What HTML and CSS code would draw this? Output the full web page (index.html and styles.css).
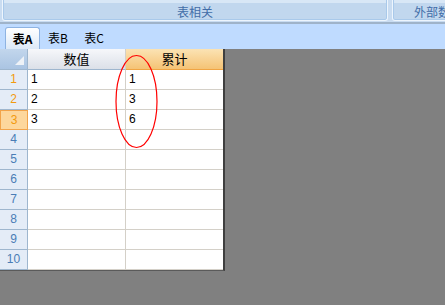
FILE: index.html
```html
<!DOCTYPE html>
<html lang="zh">
<head>
    <meta charset="UTF-8">
    <title>表A</title>
    <link rel="stylesheet" href="styles.css">
</head>
<body>
    <div class="ribbon">
        <div class="group group-main">表相关</div>
        <div class="group group-ext">外部数据</div>
    </div>
    <div class="tabs">
        <div class="tab active">表A</div>
        <div class="tab">表B</div>
        <div class="tab">表C</div>
    </div>
    <div class="sheet">
        <div class="grid">
            <div class="corner"><span class="tri"></span></div>
            <div class="col-head">数值</div>
            <div class="col-head sel">累计</div>

            <div class="row-head sel-text">1</div><div class="cell">1</div><div class="cell">1</div>
            <div class="row-head sel-text">2</div><div class="cell">2</div><div class="cell">3</div>
            <div class="row-head current">3</div><div class="cell">3</div><div class="cell">6</div>
            <div class="row-head">4</div><div class="cell"></div><div class="cell"></div>
            <div class="row-head">5</div><div class="cell"></div><div class="cell"></div>
            <div class="row-head">6</div><div class="cell"></div><div class="cell"></div>
            <div class="row-head">7</div><div class="cell"></div><div class="cell"></div>
            <div class="row-head">8</div><div class="cell"></div><div class="cell"></div>
            <div class="row-head">9</div><div class="cell"></div><div class="cell"></div>
            <div class="row-head">10</div><div class="cell"></div><div class="cell"></div>
        </div>
        <!-- 标注圈 -->
        <svg class="mark" width="46" height="96" viewBox="0 0 46 96">
            <ellipse cx="22.5" cy="47.5" rx="20.5" ry="46" fill="none" stroke="#ff0000" stroke-width="1.2"/>
        </svg>
    </div>
</body>
</html>
```

FILE: styles.css
```css
body {
    margin: 0;
    background-color: #808080;
    font-family: "Liberation Sans", "Noto Sans CJK SC", sans-serif;
    font-size: 12px;
    width: 445px;
    height: 305px;
    overflow: hidden;
}

.ribbon {
    display: flex;
    height: 22px;
    background-color: #c9dcf1;
    border-bottom: 2px solid #9fb3c9;
    overflow: hidden;
}

.group {
    box-sizing: border-box;
    height: 21px;
    padding-top: 4px;
    line-height: 15px;
    text-align: center;
    color: #416da8;
    font-family: "Noto Sans CJK SC", sans-serif;
    font-size: 12px;
    background: linear-gradient(#d8e7f6 0, #d8e7f6 3px, #c1d7ee 3px);
    border: 1px solid #edf5fd;
    border-top: none;
    border-radius: 0 0 3px 3px;
    box-shadow: inset 1px 0 #a9c9ea, inset -1px 0 #a9c9ea, inset 0 -1px #a9c9ea;
}

.group-main {
    flex: 0 0 386px;
    margin-left: 2px;
}

.group-ext {
    flex: 0 0 80px;
    margin-left: 4px;
    text-align: left;
    padding-left: 21px;
    white-space: nowrap;
}

.tabs {
    display: flex;
    height: 25px;
    background-color: #bfdbff;
    padding-left: 5px;
    align-items: flex-end;
}

.tab {
    box-sizing: border-box;
    height: 22px;
    width: 36px;
    line-height: 21px;
    text-align: center;
    font-family: "Noto Sans CJK SC", sans-serif;
    font-size: 12px;
    color: #000;
}

.tab.active {
    width: 35px;
    font-weight: bold;
    background: linear-gradient(#ffffff, #dde9f7);
    border: 1px solid #8eb3e2;
    border-bottom: none;
    border-radius: 3px 3px 0 0;
}

.sheet {
    position: relative;
    width: 225px;
}

.grid {
    display: grid;
    grid-template-columns: 28px 98px 97px;
    grid-auto-rows: 20px;
    grid-template-rows: 21px;
    background-color: #fff;
    border-right: 2px solid #3f3f3f;
    border-bottom: 1px solid #5a5a5a;
}

.grid > div {
    box-sizing: border-box;
    border-right: 1px solid #d4d0c8;
    border-bottom: 1px solid #d4d0c8;
}

.corner {
    position: relative;
    background: linear-gradient(#c2d6ec, #aac4e2);
    border-right: 1px solid #9eb6ce !important;
    border-bottom: 1px solid #9eb6ce !important;
}

.tri {
    position: absolute;
    right: 3px;
    bottom: 4px;
    width: 0;
    height: 0;
    border-left: 9px solid transparent;
    border-bottom: 9px solid #eef2f7;
}

.col-head {
    text-align: center;
    line-height: 20px;
    font-family: "Noto Sans CJK SC", sans-serif;
    font-size: 13px;
    color: #000;
    background: linear-gradient(#f6f7fa, #dbe0e8);
    border-bottom: 1px solid #9eb6ce !important;
}

.col-head.sel {
    background: linear-gradient(#fbe3b4, #f5c375);
    border-bottom: 1px solid #f0a544 !important;
    border-right: none !important;
}

.row-head {
    text-align: center;
    line-height: 19px;
    font-size: 12px;
    color: #4a7db6;
    background-color: #e4ecf7;
    border-right: 1px solid #9eb6ce !important;
    border-bottom: 1px solid #9eb6ce !important;
}

.row-head.sel-text {
    color: #f29a0e;
}

.row-head.current {
    color: #f29a0e;
    background-color: #fdd79c;
    border: 1px solid #f2a44a !important;
}

.cell {
    padding-left: 3px;
    line-height: 19px;
    font-size: 12px;
    color: #000;
}

.grid > .cell:nth-child(3n) {
    border-right: none;
}

.mark {
    position: absolute;
    left: 114px;
    top: 5px;
}
```
